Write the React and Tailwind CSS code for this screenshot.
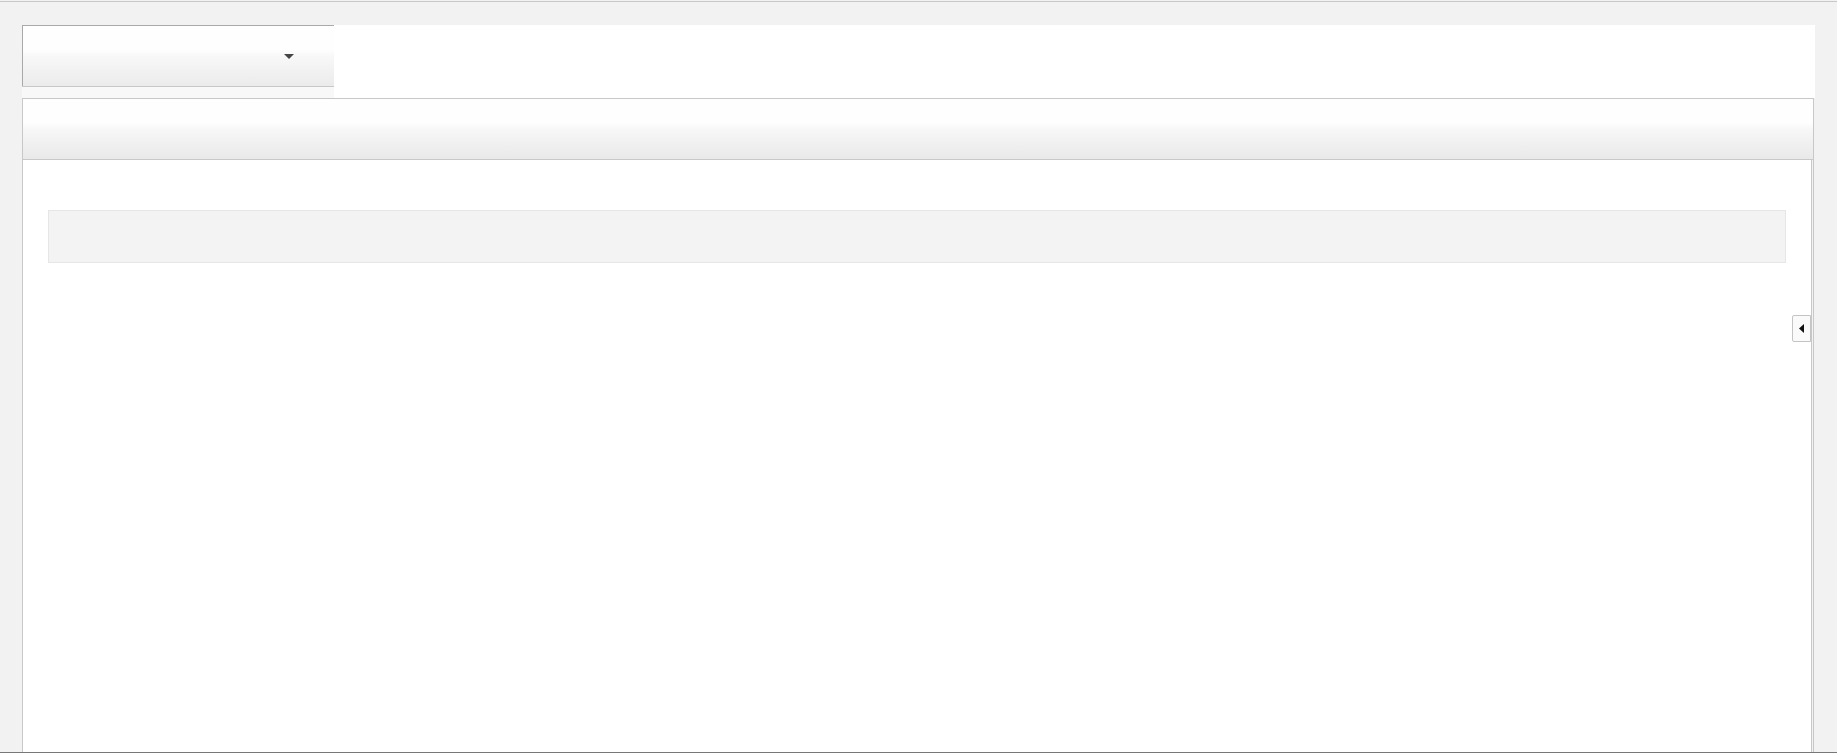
export default function App() {
  return (
    <div className="h-[753px] w-full overflow-hidden bg-[#f2f2f2] flex flex-col font-['Liberation_Sans',sans-serif]">
      <div className="h-px mt-px bg-[#c8c8c8]" />
      <div className="flex-1 flex flex-col pt-[23px] pl-[22px] pr-[22px]">
        {/* top row: selector + blank */}
        <div className="flex h-[73px] bg-white">
          <div className="w-[312px] flex flex-col">
            <div className="h-[61px] border-l border-t border-[#a9a9a9] bg-gradient-to-b from-[#fefefe] from-40% via-[#f8f8f8] to-[#ebebeb] flex items-center justify-end pr-[40px]">
              <svg width="10" height="5" viewBox="0 0 10 5">
                <path d="M0 0 L10 0 L5 5 Z" fill="#454545" />
              </svg>
            </div>
            <div className="flex-1 border-t border-[#c8c8c8] bg-[#f8f8f8]" />
          </div>
          <div className="flex-1" />
        </div>
        {/* toolbar */}
        <div className="h-[62px] mr-px border border-[#c8c8c8] bg-gradient-to-b from-[#fefefe] from-40% via-[#f7f7f7] to-[#e9e9e9]" />
        {/* content */}
        <div className="relative flex-1 mr-[3px] border-l border-r border-[#c8c8c8] bg-white pt-[50px] px-[25px] shadow-[1px_0_0_#f2f2f2,2px_0_0_#c8c8c8]">
          <div className="h-[53px] border border-[#e6e6e6] bg-[#f3f3f3]" />
          <button className="absolute right-0 top-[155px] w-[19px] h-[27px] flex items-center justify-center bg-[#fafafa] border border-[#c4c4c4] rounded-l-[2px]">
            <svg width="5" height="9" viewBox="0 0 5 9">
              <path d="M5 0 L5 9 L0 4.5 Z" fill="#111" />
            </svg>
          </button>
        </div>
      </div>
      <div className="h-px bg-[#777]" />
    </div>
  );
}
